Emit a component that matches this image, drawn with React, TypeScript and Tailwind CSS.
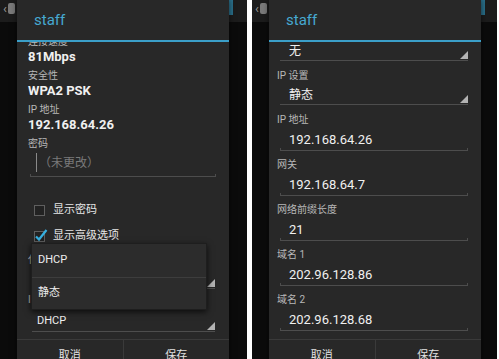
import React from 'react';

// Holo-style spinner corner arrow
const SpinnerArrow = () => (
  <svg width="8" height="8" viewBox="0 0 8 8" className="shrink-0">
    <polygon points="8,0 8,8 0,8" fill="#b3b3b3" />
  </svg>
);

const CheckBox = ({ checked }: { checked?: boolean }) => (
  <svg width="14" height="14" viewBox="0 0 14 14" className="shrink-0">
    <rect x="0.5" y="2.5" width="10" height="10" fill="#222" stroke="#5f5f5f" />
    {checked && (
      <polyline points="2,7.5 5,10.5 12.5,1" fill="none" stroke="#36b0e0" strokeWidth="2.2" />
    )}
  </svg>
);

const Label = ({ children }: { children: React.ReactNode }) => (
  <div className="h-[14px] text-[10px] leading-[14px] text-[#b8b8b8]">{children}</div>
);

// Background app behind the dialog
const ActionBar = ({ indicatorRight }: { indicatorRight: string }) => (
  <div className="flex h-[22px] items-start bg-[#1c1c1c]">
    <div className="ml-[3px] mt-[2px] flex items-center gap-[1px] text-[#9a9a9a]">
      <span className="text-[13px] leading-[13px]">‹</span>
      <span className="h-[11px] w-[7px] rounded-[2px] bg-[#7a7a7a]" />
    </div>
    <div className={`ml-auto h-[15px] w-[4px] bg-[#2a6f8a] ${indicatorRight}`} />
  </div>
);

const DialogTitle = () => (
  <>
    <div className="flex h-[40px] items-center pl-[17px] text-[15px] text-[#46a9d1]">staff</div>
    <div className="h-[2px] bg-[#3b9fc9]" />
  </>
);

const DialogButtons = () => (
  <div className="flex h-[34px] border-t border-[#3a3a3a] text-[11px] text-[#e2e2e2]">
    <div className="flex flex-1 items-center justify-center">取消</div>
    <div className="flex flex-1 items-center justify-center border-l border-[#3a3a3a]">保存</div>
  </div>
);

const LeftDialog = () => (
  <div className="absolute left-[17px] top-0 flex h-[400px] w-[212px] flex-col bg-[#282828] shadow-[0_0_6px_rgba(0,0,0,0.6)]">
    <DialogTitle />
    <div className="h-[297px] overflow-hidden">
      <div className="-mt-[7px] flex flex-col px-[11px]">
        <Label>连接速度</Label>
        <div className="mb-[4px] h-[16px] text-[13px] font-bold leading-[16px] text-[#f0f0f0]">81Mbps</div>
        <Label>安全性</Label>
        <div className="mb-[4px] h-[16px] text-[13px] font-bold leading-[16px] text-[#f0f0f0]">WPA2 PSK</div>
        <Label>IP 地址</Label>
        <div className="mb-[4px] h-[16px] text-[13px] font-bold leading-[16px] text-[#f0f0f0]">192.168.64.26</div>
        <Label>密码</Label>
        <div className="flex h-[23px] items-center pl-[8px]">
          <div className="h-[19px] w-[1px] bg-[#8a8a8a]" />
          <span className="ml-[2px] text-[12px] text-[#7a7a7a]">（未更改）</span>
        </div>
        <div className="mx-[2px] h-[3px] border-x border-b border-[#4d4d4d]" />

        <div className="mt-[20px] flex h-[26px] items-center gap-[5px] pl-[6px] text-[11px] text-[#e6e6e6]">
          <CheckBox />
          <span>显示密码</span>
        </div>
        <div className="flex h-[26px] items-center gap-[5px] pl-[6px] text-[11px] text-[#e6e6e6]">
          <CheckBox checked />
          <span>显示高级选项</span>
        </div>

        <div className="mt-[4px]">
          <Label>代理</Label>
        </div>
        <div className="ml-[4px] mr-[3px] flex h-[22px] border-b border-[#4d4d4d]">
          <div className="flex-1 pl-[5px] pt-[3px] text-[11px] leading-[16px] text-[#f0f0f0]">无</div>
          <div className="mb-[1px] self-end">
            <SpinnerArrow />
          </div>
        </div>
        <div className="mt-[4px]">
          <Label>IP 设置</Label>
        </div>
        <div className="ml-[4px] mr-[3px] flex h-[25px] border-b border-[#4d4d4d]">
          <div className="flex-1 self-end pb-[2px] pl-[5px] text-[11px] leading-[16px] text-[#f0f0f0]">DHCP</div>
          <div className="mb-[1px] self-end">
            <SpinnerArrow />
          </div>
        </div>
      </div>
    </div>
    <DialogButtons />

    {/* open spinner popup */}
    <div className="absolute left-[14px] top-[243px] flex w-[176px] flex-col border border-[#1e1e1e] bg-[#2c2c2c] shadow-[0_2px_6px_rgba(0,0,0,0.7)]">
      <div className="flex h-[33px] items-center pl-[6px] text-[11px] text-[#eeeeee]">DHCP</div>
      <div className="h-[1px] bg-[#3d3d3d]" />
      <div className="flex h-[31px] items-center pl-[6px] text-[11px] text-[#eeeeee]">静态</div>
    </div>
  </div>
);

const RightSpinner = ({ value }: { value: string }) => (
  <div className="ml-[3px] mr-[5px] flex h-[22px] border-b border-[#4d4d4d]">
    <div className="flex-1 pl-[9px] pt-[4px] text-[12px] leading-[16px] text-[#f0f0f0]">{value}</div>
    <div className="mb-[1px] self-end">
      <SpinnerArrow />
    </div>
  </div>
);

const RightField = ({ label, value }: { label: string; value: string }) => (
  <div className="flex flex-col">
    <Label>{label}</Label>
    <div className="mb-[7px] flex flex-col pt-[5px]">
      <div className="h-[16px] pl-[12px] text-[13px] leading-[16px] text-[#f0f0f0]">{value}</div>
      <div className="ml-[3px] mr-[5px] h-[3px] border-x border-b border-[#4d4d4d]" />
    </div>
  </div>
);

const RightDialog = () => (
  <div className="absolute left-[17px] top-0 flex h-[400px] w-[212px] flex-col bg-[#282828] shadow-[0_0_6px_rgba(0,0,0,0.6)]">
    <DialogTitle />
    <div className="h-[297px] overflow-hidden">
      <div className="-mt-[3px] flex flex-col px-[8px]">
        <RightSpinner value="无" />
        <div className="mt-[8px]">
          <Label>IP 设置</Label>
        </div>
        <RightSpinner value="静态" />
        <div className="mt-[8px]" />
        <RightField label="IP 地址" value="192.168.64.26" />
        <RightField label="网关" value="192.168.64.7" />
        <RightField label="网络前缀长度" value="21" />
        <RightField label="域名 1" value="202.96.128.86" />
        <RightField label="域名 2" value="202.96.128.68" />
      </div>
    </div>
    <DialogButtons />
  </div>
);

export default function App() {
  return (
    <div className="flex h-[359px] w-[499px] overflow-hidden bg-white font-[Roboto,'Noto_Sans_CJK_SC',sans-serif]">
      <div className="relative h-[359px] w-[247px] shrink-0 overflow-hidden bg-[#0b0b0b]">
        <ActionBar indicatorRight="mr-[14px]" />
        <LeftDialog />
      </div>
      <div className="w-[5px] shrink-0" />
      <div className="relative h-[359px] w-[245px] shrink-0 overflow-hidden bg-[#0b0b0b]">
        <ActionBar indicatorRight="mr-[12px]" />
        <RightDialog />
      </div>
    </div>
  );
}
